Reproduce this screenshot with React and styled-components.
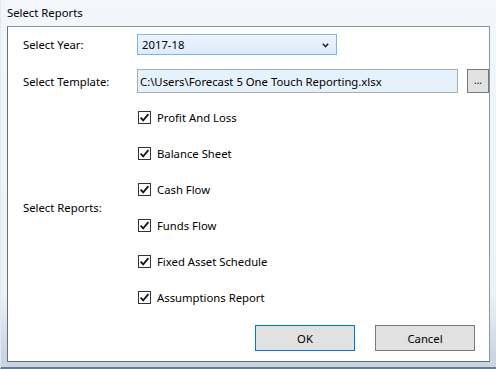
import styled, { createGlobalStyle } from 'styled-components';
import React, { useState } from 'react';

const GlobalStyle = createGlobalStyle`
  html, body {
    margin: 0;
    padding: 0;
    background: #ffffff;
  }
  * {
    box-sizing: border-box;
  }
`;

const reports = [
  'Profit And Loss',
  'Balance Sheet',
  'Cash Flow',
  'Funds Flow',
  'Fixed Asset Schedule',
  'Assumptions Report',
];

function CheckMark() {
  return (
    <svg width="11" height="11" viewBox="0 0 11 11">
      <path d="M1.6 5.6 L4.2 8.4 L9.4 2.2" fill="none" stroke="#1a1a1a" strokeWidth="1.9" />
    </svg>
  );
}

function App() {
  // all reports ticked to start with
  const [checked, setChecked] = useState(reports.map(() => true));

  const toggle = i => {
    setChecked(checked.map((c, j) => (j === i ? !c : c)));
  };

  return (
    <Window>
      <GlobalStyle />
      <TitleBar>Select Reports</TitleBar>
      <Panel>
        <FormRow>
          <Label>Select Year:</Label>
          <Combo>
            <span>2017-18</span>
            <svg width="7" height="5" viewBox="0 0 7 5">
              <path d="M0.8 0.8 L3.5 3.6 L6.2 0.8" fill="none" stroke="#222" strokeWidth="1.5" />
            </svg>
          </Combo>
        </FormRow>

        <FormRow gap={14} height={24}>
          <Label>Select Template:</Label>
          <TemplateRow>
            <PathBox>C:\Users\Forecast 5 One Touch Reporting.xlsx</PathBox>
            <BrowseButton>...</BrowseButton>
          </TemplateRow>
        </FormRow>

        <FormRow gap={6}>
          <Label>Select Reports:</Label>
          <CheckList>
            {reports.map((r, i) => (
              <CheckRow key={r} onClick={() => toggle(i)}>
                <Box>{checked[i] && <CheckMark />}</Box>
                <span>{r}</span>
              </CheckRow>
            ))}
          </CheckList>
        </FormRow>

        <ButtonRow>
          <Button primary>OK</Button>
          <Button>Cancel</Button>
        </ButtonRow>
      </Panel>
    </Window>
  );
}

export default App;

const Window = styled.div`
  width: 496px;
  height: 369px;
  display: flex;
  flex-direction: column;
  padding: 0 6px 5px 6px;
  background: linear-gradient(to bottom, #f3f6fa 0%, #eef2f7 80%, #c9d5e2 97%);
  border-left: 1px solid #e2e8ef;
  border-bottom: 2px solid #6a7b8c;
  font-family: "Noto Sans", "Open Sans", sans-serif;
  font-size: 11.3px;
  color: #000;
`;

const TitleBar = styled.div`
  height: 26px;
  display: flex;
  align-items: center;
  padding-bottom: 1px;
  color: #000;
`;

const Panel = styled.div`
  flex: 1;
  display: flex;
  flex-direction: column;
  padding: 7px 0 0 15px;
  background: #fff;
  border: 1px solid #8d969f;
  border-bottom-color: #5f6a75;
  border-left-color: #66717c;
`;

const FormRow = styled.div`
  display: flex;
  align-items: center;
  margin-top: ${p => p.gap || 0}px;
  height: ${p => (p.height ? p.height + 'px' : 'auto')};
`;

const Label = styled.div`
  width: 114px;
  flex-shrink: 0;
  white-space: nowrap;
`;

const Combo = styled.div`
  width: 200px;
  height: 21px;
  display: flex;
  align-items: center;
  justify-content: space-between;
  padding: 0 7px 0 4px;
  background: linear-gradient(to bottom, #ecf4fc, #dcecfc);
  border: 1px solid #7eb4ea;

  svg {
    margin-top: 1px;
  }
`;

const TemplateRow = styled.div`
  flex: 1;
  display: flex;
  align-items: stretch;
  gap: 9px;
  height: 24px;
`;

const PathBox = styled.div`
  flex: 1;
  display: flex;
  align-items: center;
  padding-left: 2px;
  background: #e5f1fb;
  border: 1px solid #adadad;
  white-space: nowrap;
  overflow: hidden;
`;

const BrowseButton = styled.div`
  width: 22px;
  display: flex;
  align-items: center;
  justify-content: center;
  padding-bottom: 3px;
  background: #e1e1e1;
  border: 1px solid #7a7a7a;
  font-size: 10px;
`;

const CheckList = styled.div`
  display: flex;
  flex-direction: column;
`;

const CheckRow = styled.div`
  height: 36px;
  display: flex;
  align-items: center;
  gap: 6px;
  padding-left: 1px;
  cursor: default;
`;

const Box = styled.div`
  width: 13px;
  height: 13px;
  display: flex;
  align-items: center;
  justify-content: center;
  background: #fff;
  border: 1px solid #333;
`;

const ButtonRow = styled.div`
  display: flex;
  justify-content: flex-end;
  gap: 20px;
  padding-right: 14px;
  margin-top: 10px;
`;

const Button = styled.div`
  width: 100px;
  height: 26px;
  display: flex;
  align-items: center;
  justify-content: center;
  background: #e1e1e1;
  border: 1px solid ${p => (p.primary ? '#0078d7' : '#7a7a7a')};
`;
